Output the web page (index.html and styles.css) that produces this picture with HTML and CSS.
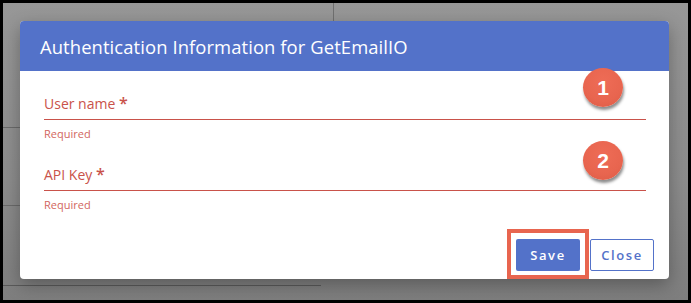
FILE: index.html
```html
<!DOCTYPE html>
<html>
<head>
<meta charset="utf-8">
<link rel="stylesheet" href="styles.css">
</head>
<body>
<div class="frame">
  <div class="dialog">
    <div class="header">Authentication Information for GetEmailIO</div>
    <div class="body">
      <div class="field">
        <div class="label">User name <span class="req">*</span></div>
        <div class="line"></div>
        <div class="helper">Required</div>
      </div>
      <div class="field">
        <div class="label">API Key <span class="req">*</span></div>
        <div class="line"></div>
        <div class="helper">Required</div>
      </div>
    </div>
    <div class="footer">
      <div class="save-wrap">
        <button class="btn btn-primary">Save</button>
        <span class="highlight"></span>
      </div>
      <button class="btn btn-outline">Close</button>
    </div>
    <span class="badge badge-one">1</span>
    <span class="badge badge-two">2</span>
  </div>
</div>
</body>
</html>
```

FILE: styles.css
```css
html, body {
  margin: 0;
  padding: 0;
}
body {
  background: #000;
  width: 691px;
  height: 303px;
  overflow: hidden;
  font-family: "Open Sans", "Liberation Sans", sans-serif;
}
.frame {
  margin: 3px;
  width: 685px;
  height: 297px;
  box-sizing: border-box;
  padding: 18px 0 0 17px;
  background:
    linear-gradient(#707070, #707070) 330px 0 / 1px 18px no-repeat,
    linear-gradient(#6a6a6a, #6a6a6a) 0 124px / 17px 1px no-repeat,
    linear-gradient(#6a6a6a, #6a6a6a) 0 202px / 17px 1px no-repeat,
    linear-gradient(#5a5a5a, #5a5a5a) 0 282px / 318px 1px no-repeat,
    linear-gradient(180deg, #979797 0%, #8c8c8c 60%, #7e7e7e 100%);
}
.dialog {
  position: relative;
  width: 649px;
  height: 258px;
  background: #fff;
  border-radius: 4px;
  box-shadow: 0 6px 18px rgba(0, 0, 0, 0.3);
  display: flex;
  flex-direction: column;
}
.header {
  height: 50px;
  flex: none;
  background: #5372c9;
  border-radius: 4px 4px 0 0;
  color: #fff;
  font-size: 18.4px;
  display: flex;
  align-items: center;
  padding-left: 20px;
  letter-spacing: 0.1px;
}
.body {
  padding: 22px 23px 0 24px;
}
.field {
  margin-bottom: 23px;
}
.label {
  font-size: 14px;
  line-height: 20px;
  color: #c9524a;
}
.req {
  font-size: 16px;
  font-weight: 600;
}
.line {
  margin-top: 5px;
  height: 0;
  border-bottom: 1px solid #c9524a;
}
.helper {
  margin-top: 6px;
  font-size: 11px;
  line-height: 15px;
  color: #d2665e;
}
.footer {
  margin-top: auto;
  display: flex;
  justify-content: flex-end;
  gap: 10px;
  padding: 0 15px 8px 0;
}
.save-wrap {
  position: relative;
  display: flex;
}
.btn {
  height: 32px;
  box-sizing: border-box;
  font-family: "Open Sans", "Liberation Sans", sans-serif;
  font-size: 13px;
  font-weight: 600;
  letter-spacing: 1.6px;
  border-radius: 2px;
  padding: 0;
  cursor: pointer;
}
.btn-primary {
  width: 64px;
  background: #5372c9;
  color: #fff;
  border: none;
}
.btn-outline {
  width: 64px;
  background: #fff;
  color: #5372c9;
  border: 1px solid #5372c9;
}
.highlight {
  position: absolute;
  left: -9px;
  right: -9px;
  top: -10px;
  bottom: -8px;
  border: 4px solid #e8654f;
}
.badge {
  position: absolute;
  width: 40px;
  height: 39px;
  border-radius: 50%;
  background: radial-gradient(circle at 50% 35%, #ee6c56 0%, #e8654f 60%, #dc5a45 100%);
  box-shadow: 1px 3px 3px rgba(0, 0, 0, 0.45);
  color: #fff;
  font-family: "Liberation Sans", Arial, sans-serif;
  font-weight: bold;
  font-size: 21px;
  display: flex;
  align-items: center;
  justify-content: center;
}
.badge-one {
  left: 563px;
  top: 47px;
}
.badge-two {
  left: 563px;
  top: 120px;
}
```
